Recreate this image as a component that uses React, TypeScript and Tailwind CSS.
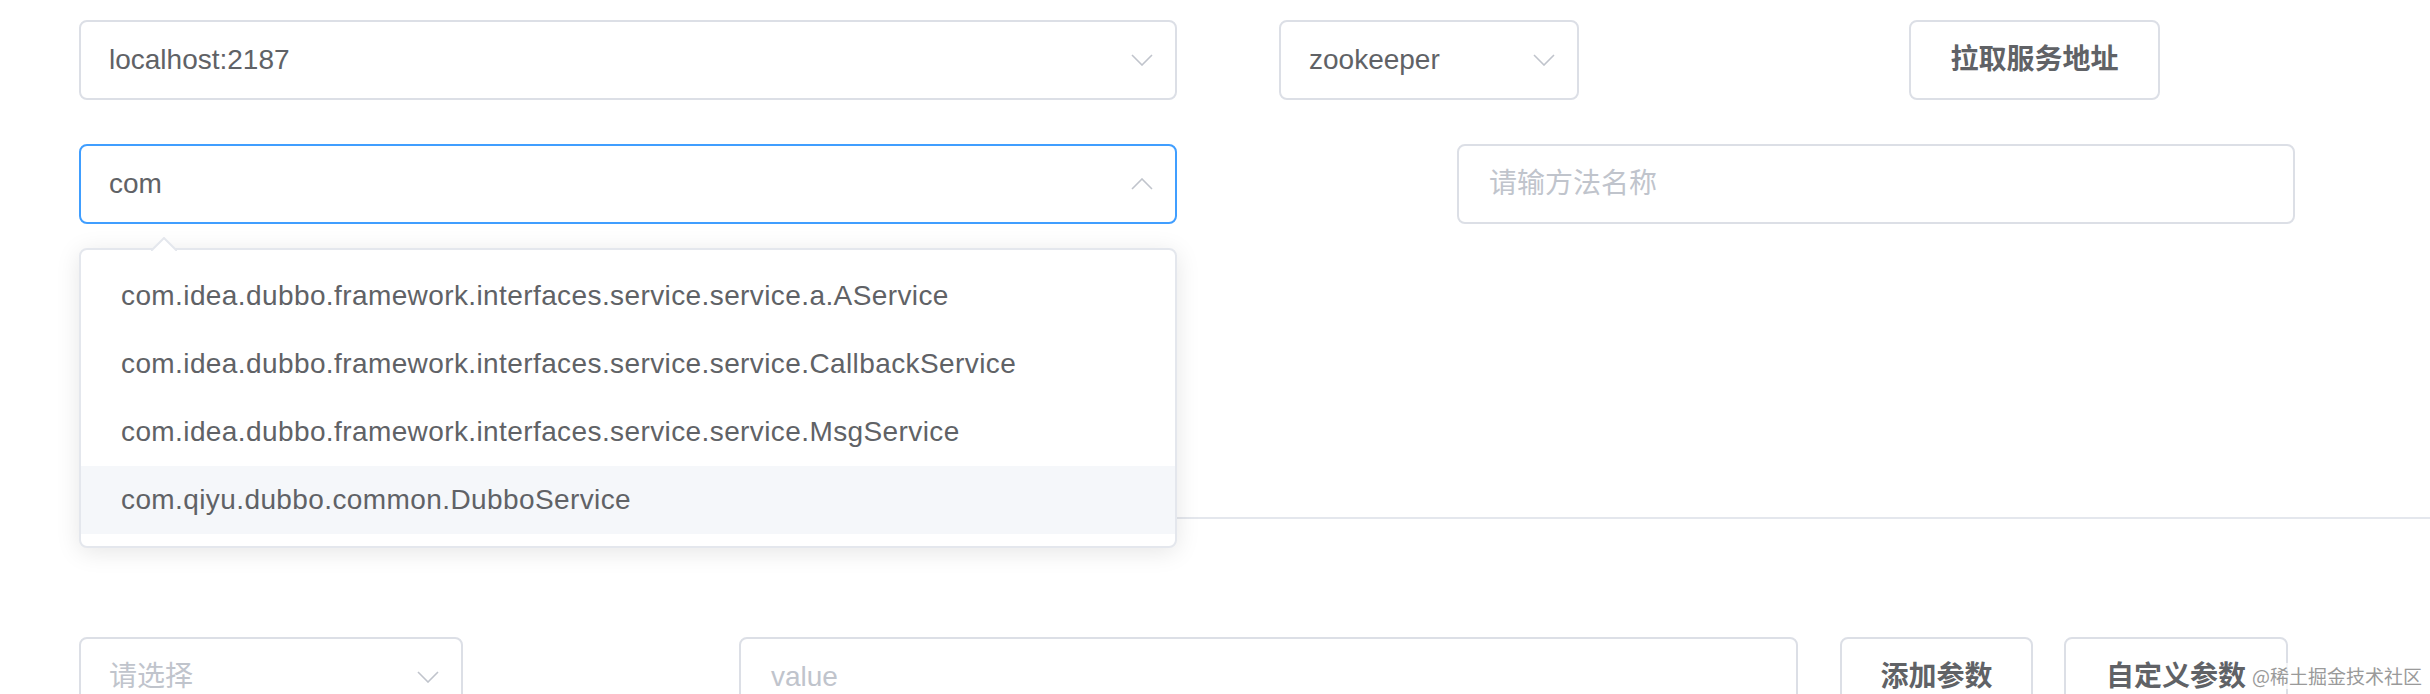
import React from 'react';

const font = { fontFamily: '"Liberation Sans", "Noto Sans CJK SC", sans-serif' };

const Chevron = ({ up = false }: { up?: boolean }) => (
  <svg width="22" height="12" viewBox="0 0 22 12" className={up ? 'rotate-180' : ''}>
    <path d="M1 1 L11 11 L21 1" fill="none" stroke="#c0c4cc" strokeWidth="1.6" />
  </svg>
);

const Select = ({
  value,
  placeholder,
  width,
  focused = false,
}: {
  value?: string;
  placeholder?: string;
  width: string;
  focused?: boolean;
}) => (
  <div
    className={`${width} h-[80px] shrink-0 flex items-center justify-between rounded-[8px] border-2 bg-white pl-[28px] pr-[22px] ${
      focused ? 'border-[#409eff]' : 'border-[#dcdfe6]'
    }`}
  >
    <span className={`text-[28px] ${value ? 'text-[#606266]' : 'text-[#c0c4cc]'}`}>{value ?? placeholder}</span>
    <Chevron up={focused} />
  </div>
);

const Input = ({ placeholder, width }: { placeholder: string; width: string }) => (
  <div className={`${width} h-[80px] shrink-0 flex items-center rounded-[8px] border-2 border-[#dcdfe6] bg-white pl-[30px]`}>
    <span className="text-[28px] text-[#c0c4cc]">{placeholder}</span>
  </div>
);

const Btn = ({ label, width }: { label: string; width: string }) => (
  <button
    className={`${width} h-[80px] shrink-0 flex items-center justify-center rounded-[8px] border-2 border-[#dcdfe6] bg-white text-[28px] font-semibold text-[#606266]`}
  >
    {label}
  </button>
);

const services = [
  'com.idea.dubbo.framework.interfaces.service.service.a.AService',
  'com.idea.dubbo.framework.interfaces.service.service.CallbackService',
  'com.idea.dubbo.framework.interfaces.service.service.MsgService',
  'com.qiyu.dubbo.common.DubboService',
];

export default function App() {
  return (
    <div className="relative h-[694px] w-[2430px] overflow-hidden bg-white" style={font}>
      <div className="pl-[79px] pt-[20px]">
        <div className="flex">
          <Select value="localhost:2187" width="w-[1098px]" />
          <div className="ml-[102px]">
            <Select value="zookeeper" width="w-[300px]" />
          </div>
          <div className="ml-[330px]">
            <Btn label="拉取服务地址" width="w-[251px]" />
          </div>
        </div>

        <div className="mt-[44px] flex">
          <div className="relative">
            <Select value="com" width="w-[1098px]" focused />
            {/* autocomplete dropdown */}
            <div className="absolute left-0 top-[104px] z-10 w-[1098px] rounded-[8px] border-2 border-[#e4e7ed] bg-white py-[12px] shadow-[0_4px_24px_rgba(0,0,0,0.1)]">
              <svg width="26" height="14" viewBox="0 0 26 14" className="absolute left-[70px] top-[-13px]">
                <polygon points="0,14 13,1 26,14" fill="#fff" />
                <path d="M0 14 L13 1 L26 14" fill="none" stroke="#e4e7ed" strokeWidth="2" />
              </svg>
              {services.map((s, i) => (
                <div
                  key={s}
                  className={`flex h-[68px] items-center px-[40px] text-[28px] tracking-[0.4px] text-[#606266] ${
                    i === 3 ? 'bg-[#f5f7fa]' : ''
                  }`}
                >
                  {s}
                </div>
              ))}
            </div>
          </div>
          <div className="ml-[280px]">
            <Input placeholder="请输方法名称" width="w-[838px]" />
          </div>
        </div>
      </div>

      <div className="ml-[79px] mt-[293px] h-[2px] bg-[#e4e7ed]" />

      <div className="mt-[118px] flex pl-[79px]">
        <Select placeholder="请选择" width="w-[384px]" />
        <div className="ml-[276px]">
          <Input placeholder="value" width="w-[1059px]" />
        </div>
        <div className="ml-[42px]">
          <Btn label="添加参数" width="w-[193px]" />
        </div>
        <div className="ml-[31px]">
          <Btn label="自定义参数" width="w-[224px]" />
        </div>
      </div>

      <div
        className="absolute right-[6px] top-[663px] bg-white/70 px-[2px] text-[19px] leading-[26px] text-[#9a9a9a]"
        style={{ fontFamily: '"Noto Sans CJK SC", sans-serif' }}
      >
        @稀土掘金技术社区
      </div>
    </div>
  );
}
